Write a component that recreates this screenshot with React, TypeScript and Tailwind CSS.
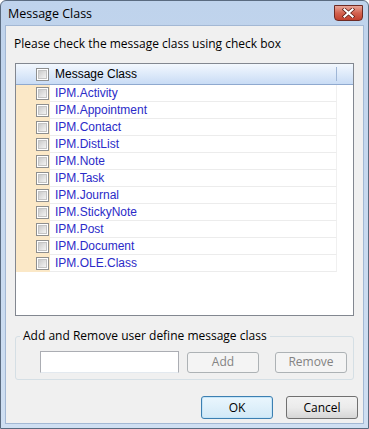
import React from "react";

const items = [
  "IPM.Activity",
  "IPM.Appointment",
  "IPM.Contact",
  "IPM.DistList",
  "IPM.Note",
  "IPM.Task",
  "IPM.Journal",
  "IPM.StickyNote",
  "IPM.Post",
  "IPM.Document",
  "IPM.OLE.Class",
];

function CheckBox() {
  return (
    <span className="block w-[13px] h-[13px] border border-[#8e8f8f] bg-white p-[1px] shrink-0">
      <span className="block w-full h-full bg-gradient-to-br from-[#cbcbcb] to-[#f3f3f3] border border-[#c4c4c4]" />
    </span>
  );
}

export default function App() {
  return (
    <div
      className="w-[369px] h-[429px] flex flex-col bg-gradient-to-b from-[#bfd3ec] to-[#cfdff2] border border-[#5a6b80] rounded-t-[6px] overflow-hidden px-[4px] pb-[4px] text-[12px] text-black"
      style={{ fontFamily: '"Open Sans", "Noto Sans", sans-serif' }}
    >
      {/* title bar */}
      <div className="h-[24px] flex items-center justify-between shrink-0">
        <span className="pl-[3px] pt-[2px] text-[12.5px] text-black">Message Class</span>
        <button className="w-[29px] h-[16px] mt-[-1px] mr-[1px] rounded-b-[4px] border border-[#6d2a24] bg-gradient-to-b from-[#e8a598] via-[#d3624f] to-[#c2402e] flex items-center justify-center">
          <svg width="13" height="10" viewBox="0 0 13 10">
            <path d="M2.5 1.5 L10.5 8.5 M10.5 1.5 L2.5 8.5" stroke="#5a1a12" strokeWidth="3.6" strokeLinecap="square" />
            <path d="M2.5 1.5 L10.5 8.5 M10.5 1.5 L2.5 8.5" stroke="#ffffff" strokeWidth="2.2" strokeLinecap="square" />
          </svg>
        </button>
      </div>

      {/* client area */}
      <div className="flex-1 flex flex-col bg-[#f0f0f0] border border-[#a3b8d4]">
        <div className="pl-[8px] pt-[9px] h-[37px]">Please check the message class using check box</div>

        {/* list view */}
        <div
          className="mx-[9px] h-[253px] border border-[#828790] bg-white flex flex-col"
          style={{ fontFamily: '"Liberation Sans", Arial, sans-serif' }}
        >
          <div className="h-[21px] shrink-0 flex items-center border-b border-[#8fa9cf] bg-gradient-to-b from-[#f3f8fe] to-[#c9dcf5]">
            <span className="w-[20px] shrink-0" />
            <CheckBox />
            <span className="w-[287px] pl-[6px]">Message Class</span>
            <span className="w-px h-[14px] bg-[#9fb6d6]" />
          </div>
          <div className="flex flex-col">
            {items.map((name) => (
              <div key={name} className="h-[17px] flex">
                <div className="w-[20px] h-full bg-[#fbe8c7]" />
                <div className="w-[14px] h-full bg-[#fbe8c7] flex items-center">
                  <CheckBox />
                </div>
                <div className="w-[287px] h-full flex items-center border-b border-[#ececec] border-r border-r-[#f0f0f0]">
                  <span className="pl-[5px] text-[#2b2bc8]">{name}</span>
                </div>
              </div>
            ))}
          </div>
        </div>

        {/* group box */}
        <div className="mx-[9px] mt-[20px] h-[44px] relative border border-[#d5dfe5] rounded-[3px] flex items-center gap-[8px] pl-[24px]">
          <span className="absolute -top-[10px] left-[4px] px-[3px] bg-[#f0f0f0]">
            Add and Remove user define message class
          </span>
          <div className="w-[139px] h-[22px] mt-[8px] bg-white border border-[#abadb3] border-b-[#e3e9ef]" />
          <button className="w-[72px] h-[21px] mt-[8px] rounded-[3px] border border-[#adb2b5] bg-[#f4f4f4] text-[#838383]">
            Add
          </button>
          <button className="w-[72px] h-[21px] mt-[8px] ml-[8px] rounded-[3px] border border-[#adb2b5] bg-[#f4f4f4] text-[#838383]">
            Remove
          </button>
        </div>

        {/* buttons */}
        <div className="flex justify-end gap-[13px] pr-[5px] mt-[16px]">
          <button className="w-[72px] h-[23px] rounded-[3px] border border-[#3c7fb1] bg-gradient-to-b from-[#eaf6fd] to-[#d2e9f7] shadow-[inset_0_0_0_1px_#c5e5f8]">
            OK
          </button>
          <button className="w-[72px] h-[23px] rounded-[3px] border border-[#707070] bg-gradient-to-b from-[#f2f2f2] via-[#ebebeb] to-[#d6d6d6]">
            Cancel
          </button>
        </div>
      </div>
    </div>
  );
}
